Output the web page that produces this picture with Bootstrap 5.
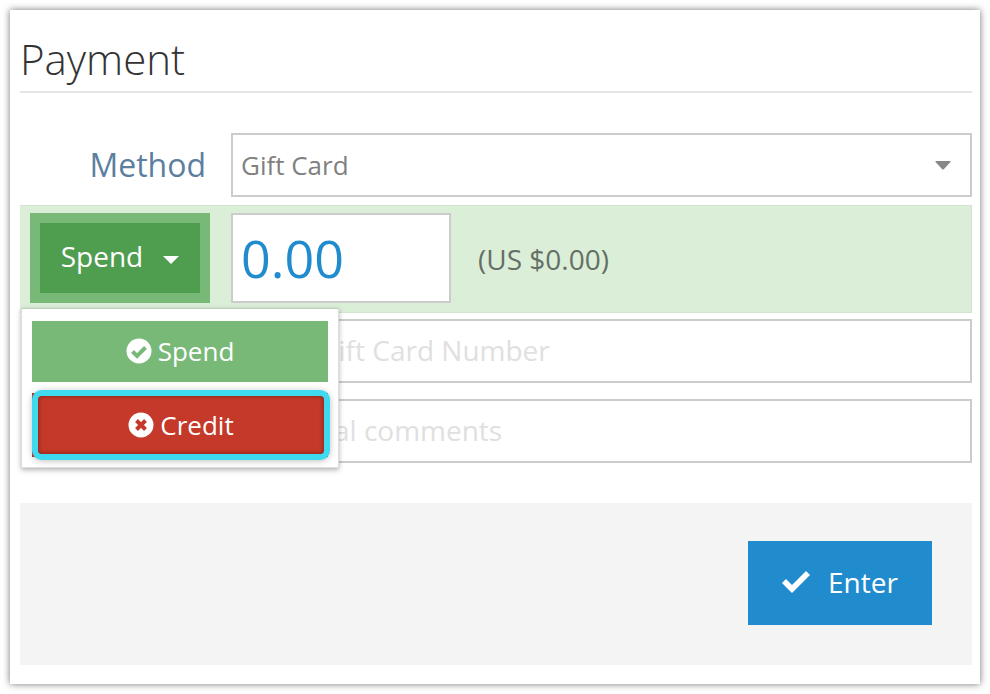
<!DOCTYPE html>
<html lang="en">
<head>
  <meta charset="UTF-8" />
  <meta name="viewport" content="width=device-width, initial-scale=1" />
  <title>Payment</title>
  <link href="https://cdn.jsdelivr.net/npm/bootstrap@5.3.3/dist/css/bootstrap.min.css" rel="stylesheet" />
  <style>
    html, body { height: 100%; }
    body {
      background-color: #fff;
      font-family: "Open Sans", "Liberation Sans", sans-serif;
      padding: 10px;
      overflow: hidden;
    }
    .pay-window {
      width: 970px;
      height: 674px;
      padding: 0 8px 0 10px;
      background: #fff;
      box-shadow: 0 0 7px rgba(0,0,0,.55);
    }
    .pay-title {
      height: 83px;
      margin: 0;
      padding-top: 22px;
      font-size: 42px;
      line-height: 54px;
      font-weight: 300;
      color: #333;
      border-bottom: 2px solid #e5e5e5;
    }
    .pay-method { margin-top: 40px; height: 64px; }
    .pay-label {
      width: 211px;
      padding-right: 25px;
      text-align: right;
      font-size: 32px;
      color: #5d7f9f;
    }
    .pay-select.form-select, .pay-input.form-control, .pay-amount.form-control {
      border: 2px solid #ccc;
      border-radius: 0;
      box-shadow: none;
      font-size: 26px;
      padding: 0 8px;
      background-color: #fff;
    }
    .pay-select.form-select {
      height: 64px;
      color: #808080;
      background-image: url("data:image/svg+xml,%3Csvg xmlns='http://www.w3.org/2000/svg' viewBox='0 0 16 9'%3E%3Cpath fill='%23888' d='M1 0h14q1 0 .5 1L9 8q-1 1-2 0L.5 1Q0 0 1 0z'/%3E%3C/svg%3E");
      background-size: 16px 9px;
      background-position: right 19px center;
    }
    .pay-band {
      margin-top: 8px;
      height: 108px;
      padding: 7px 0 0 10px;
      background: #dbefd8;
      border: 1px solid #d2e6cf;
      border-left: 0;
    }
    .pay-toggle.btn {
      width: 180px;
      height: 90px;
      border: 10px solid #78b978;
      border-radius: 0;
      background: #4f9d4f;
      color: #fff;
      font-size: 28px;
      padding: 0 0 4px;
    }
    .pay-caret {
      width: 0;
      height: 0;
      margin: 7px 0 0 20px;
      border-left: 8px solid transparent;
      border-right: 8px solid transparent;
      border-top: 8px solid #fff;
    }
    .pay-amount.form-control {
      width: 220px;
      height: 90px;
      margin-left: 21px;
      padding: 0 8px 2px;
      font-size: 52px;
      color: #208cce;
    }
    .pay-usd { margin-left: 27px; margin-top: 27px; font-size: 28px; line-height: 38px; color: #666f66; }
    .pay-input.form-control { height: 64px; margin-left: 211px; width: 741px; padding-bottom: 2px; font-size: 28px; }
    .pay-input::placeholder { color: #e0e0e0; opacity: 1; }
    .pay-input-first.form-control { margin-top: 6px; }
    .pay-input-second.form-control { margin-top: 16px; padding-left: 11px; }
    .pay-menu {
      position: absolute;
      left: 11px;
      top: 298px;
      width: 318px;
      height: 160px;
      background: #fff;
      border: 1px solid #ddd;
      border-top-color: #bcd0b9;
      box-shadow: 0 2px 5px rgba(0,0,0,.3);
    }
    /* the red item keeps its square corners behind the focus ring */
    .pay-menu::before {
      content: "";
      position: absolute;
      left: 10px;
      top: 84px;
      width: 296px;
      height: 64px;
      background: #c43929;
    }
    .pay-item.btn {
      position: absolute;
      left: 10px;
      border: 0;
      border-radius: 0;
      color: #fff;
      font-size: 26px;
      line-height: 1;
      padding: 0 0 2px;
      gap: 6px;
    }
    .pay-spend.btn { top: 12px; width: 296px; height: 61px; background: #78b978; }
    .pay-credit.btn {
      top: 87px;
      left: 16px;
      width: 286px;
      height: 58px;
      padding: 0;
      background: #c43929;
      border-radius: 4px;
      box-shadow: 0 0 0 6px #3ddaf0, 0 1px 6px 6px rgba(0,0,0,.25), inset 0 0 4px rgba(90,15,5,.7);
    }
    .pay-foot {
      margin-top: 40px;
      height: 162px;
      padding: 38px 40px 0 0;
      background: #f4f4f4;
    }
    .pay-enter.btn {
      width: 184px;
      height: 84px;
      border: 0;
      border-radius: 0;
      background: #208cce;
      color: #fff;
      font-size: 28px;
      gap: 18px;
      padding: 0 0 2px;
    }
  </style>
</head>
<body>
  <div class="pay-window position-relative">
    <h2 class="pay-title">Payment</h2>

    <div class="pay-method d-flex align-items-center">
      <div class="pay-label flex-shrink-0">Method</div>
      <select class="form-select pay-select">
        <option>Gift Card</option>
      </select>
    </div>

    <div class="pay-band d-flex align-items-start">
      <button type="button" class="btn pay-toggle d-flex align-items-center justify-content-center flex-shrink-0">
        Spend <span class="pay-caret"></span>
      </button>
      <input class="form-control pay-amount flex-shrink-0" value="0.00" />
      <div class="pay-usd text-nowrap">(US $0.00)</div>
    </div>

    <input class="form-control pay-input pay-input-first" placeholder="Enter Gift Card Number" />
    <input class="form-control pay-input pay-input-second" placeholder="Optional comments" />

    <div class="pay-foot d-flex justify-content-end">
      <button type="button" class="btn pay-enter d-flex align-items-center justify-content-center">
        <svg width="28" height="22" viewBox="0 0 28 22"><path fill="#fff" d="M10 22 0 12l4-4 6 6L24 0l4 4z"/></svg>
        Enter
      </button>
    </div>

    <div class="pay-menu">
      <button type="button" class="btn pay-item pay-spend d-flex align-items-center justify-content-center">
        <svg width="26" height="26" viewBox="0 0 26 26"><circle cx="13" cy="13" r="12.5" fill="#fff"/><path fill="none" stroke="#78b978" stroke-width="4" d="m6.500 13.500 4.500 4.500 8.500-8.500"/></svg>
        Spend
      </button>
      <button type="button" class="btn pay-item pay-credit d-flex align-items-center justify-content-center">
        <svg width="26" height="26" viewBox="0 0 26 26"><circle cx="13" cy="13" r="12.500" fill="#fff"/><path fill="none" stroke="#c43929" stroke-width="4" d="m8.500 8.500 9 9m0-9-9 9"/></svg>
        Credit
      </button>
    </div>
  </div>

  <script src="https://cdn.jsdelivr.net/npm/bootstrap@5.3.3/dist/js/bootstrap.bundle.min.js"></script>
</body>
</html>
